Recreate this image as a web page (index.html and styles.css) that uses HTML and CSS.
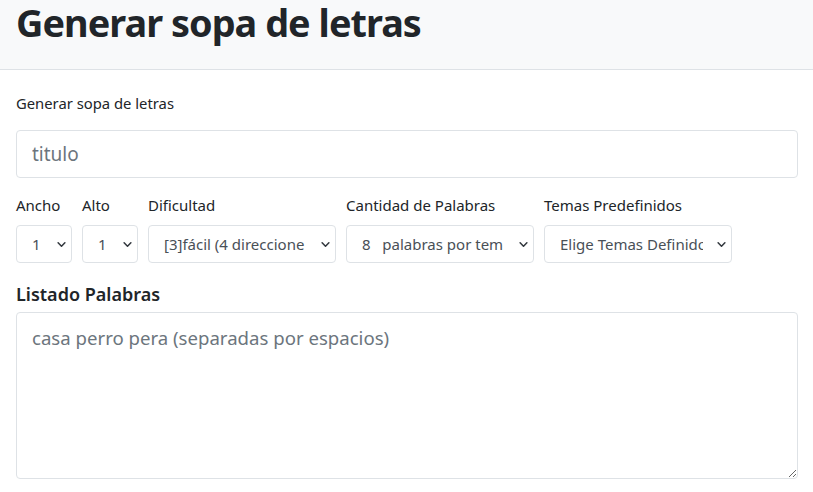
FILE: index.html
```html
<!DOCTYPE html>
<html lang="es">
<head>
<meta charset="utf-8">
<title>Generar sopa de letras</title>
<link rel="stylesheet" href="styles.css">
</head>
<body>
<header class="topbar">
  <h1 class="title">Generar sopa de letras</h1>
</header>
<main class="content">
  <p class="intro">Generar sopa de letras</p>
  <input class="field field-lg" type="text" placeholder="titulo">
  <div class="options">
    <div class="group">
      <label class="lbl">Ancho</label>
      <div class="sel sel-sm"><span>1</span><svg class="chev" viewBox="0 0 16 16"><path d="M2 5l6 6 6-6" /></svg></div>
    </div>
    <div class="group">
      <label class="lbl">Alto</label>
      <div class="sel sel-sm"><span>1</span><svg class="chev" viewBox="0 0 16 16"><path d="M2 5l6 6 6-6" /></svg></div>
    </div>
    <div class="group">
      <label class="lbl">Dificultad</label>
      <div class="sel sel-md"><span>[3]fácil (4 direccione</span><svg class="chev" viewBox="0 0 16 16"><path d="M2 5l6 6 6-6" /></svg></div>
    </div>
    <div class="group">
      <label class="lbl">Cantidad de Palabras</label>
      <div class="sel sel-md"><span>8&nbsp;&nbsp; palabras por tem</span><svg class="chev" viewBox="0 0 16 16"><path d="M2 5l6 6 6-6" /></svg></div>
    </div>
    <div class="group">
      <label class="lbl">Temas Predefinidos</label>
      <div class="sel sel-md"><span>Elige Temas Definidos</span><svg class="chev" viewBox="0 0 16 16"><path d="M2 5l6 6 6-6" /></svg></div>
    </div>
  </div>
  <h2 class="subtitle">Listado Palabras</h2>
  <textarea class="field area" placeholder="casa perro pera (separadas por espacios)"></textarea>
</main>
</body>
</html>
```
FILE: styles.css
```css
* { box-sizing: border-box; }
html, body { margin: 0; padding: 0; background: #fff; }
body {
  font-family: "Noto Sans", "Open Sans", sans-serif;
  color: #212529;
  width: 813px;
  height: 492px;
  overflow: hidden;
}
.topbar {
  height: 70px;
  background: #f8f9fa;
  border-bottom: 1px solid #dee2e6;
  padding: 0 16px;
}
.title {
  margin: 0;
  font-size: 37.8px;
  font-weight: 700;
  line-height: 46px;
  letter-spacing: -0.95px;
  color: #212529;
}
.content {
  padding: 0 16px;
}
.intro {
  margin: 0;
  padding-top: 23px;
  font-size: 14.8px;
  line-height: 20px;
  height: 60px;
}
.field {
  display: block;
  width: 782px;
  border: 1px solid #dee2e6;
  border-radius: 4px;
  font-family: inherit;
  color: #212529;
  background: #fff;
  outline: none;
}
.field::placeholder { color: #6c757d; opacity: 1; }
.field-lg {
  height: 48px;
  padding: 0 15px;
  font-size: 19px;
}
.options {
  display: flex;
  gap: 10px;
  margin-top: 17px;
}
.group {
  display: flex;
  flex-direction: column;
}
.lbl {
  font-size: 15px;
  line-height: 20px;
  height: 30px;
  color: #212529;
}
.sel {
  height: 38px;
  border: 1px solid #dee2e6;
  border-radius: 4px;
  display: flex;
  align-items: center;
  padding: 0 5px 0 15px;
  font-size: 15px;
  color: #495057;
  overflow: hidden;
  white-space: nowrap;
}
.sel span { flex: 1; overflow: hidden; }
.sel-sm { width: 56px; padding-left: 15px; }
.sel-md { width: 188px; }
.chev {
  width: 9px;
  height: 9px;
  flex: none;
  margin-left: 14px;
}
.chev path {
  fill: none;
  stroke: #343a40;
  stroke-width: 2.8;
  stroke-linecap: round;
  stroke-linejoin: round;
}
.subtitle {
  margin: 0;
  padding-top: 19px;
  font-size: 18px;
  font-weight: 600;
  line-height: 24px;
  height: 49px;
}
.area {
  height: 167px;
  padding: 12px 15px;
  font-size: 18.6px;
  resize: vertical;
}
```
